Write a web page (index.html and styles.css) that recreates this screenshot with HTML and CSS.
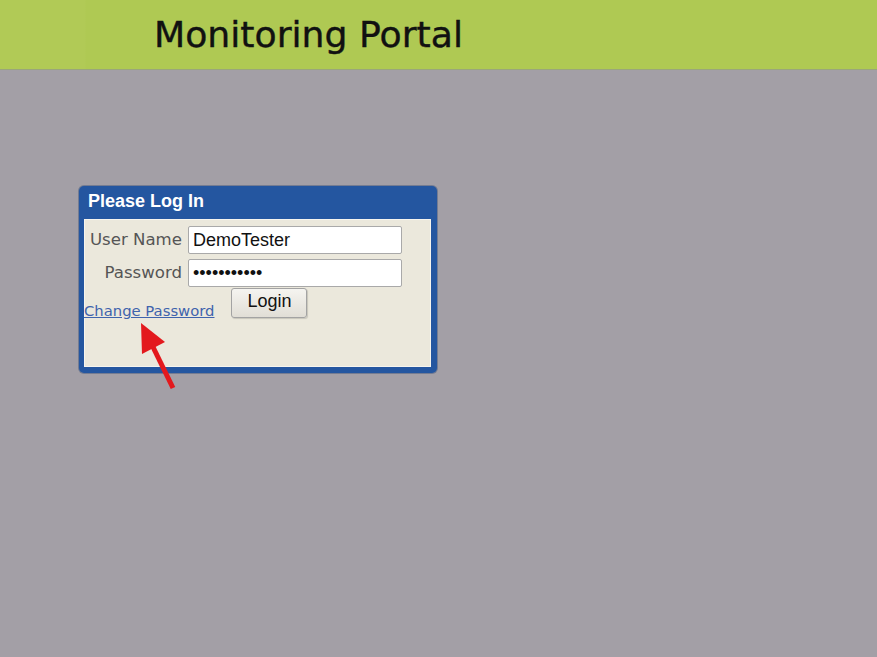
FILE: index.html
```html
<!DOCTYPE html>
<html>
<head>
<meta charset="utf-8">
<title>Monitoring Portal</title>
<link rel="stylesheet" href="styles.css">
</head>
<body>
<header class="topbar">
  <div class="logo-space"></div>
  <h1 class="title">Monitoring Portal</h1>
</header>
<main class="main">
  <section class="panel">
    <div class="panel-head">Please Log In</div>
    <div class="panel-body">
      <div class="fields">
        <label class="label" for="user">User Name</label>
        <input class="field" id="user" type="text" value="DemoTester">
        <label class="label" for="pass">Password</label>
        <input class="field" id="pass" type="password" value="DemoTester1">
      </div>
      <div class="actions">
        <a class="change" href="#">Change Password</a>
        <button class="login" type="button">Login</button>
      </div>
    </div>
  </section>
  <svg class="arrow" width="50" height="80" viewBox="0 0 50 80">
    <line x1="44" y1="77" x2="24" y2="36" stroke="#e3191d" stroke-width="5"/>
    <polygon points="12,12 36,31 13,43" fill="#e3191d"/>
  </svg>
</main>
</body>
</html>
```
FILE: styles.css
```css
html, body {
  margin: 0;
  padding: 0;
}
body {
  background: #a39fa6;
  width: 877px;
  height: 657px;
  overflow: hidden;
  font-family: "DejaVu Sans", Verdana, sans-serif;
}
.topbar {
  height: 69px;
  background: #afc953;
  display: flex;
  align-items: center;
  box-shadow: 0 1px 0 #9aa67a;
}
.logo-space {
  width: 154px;
  height: 69px;
  background: linear-gradient(90deg, #b1ca56 0px, #b1ca56 85px, #afc953 86px);
}
.title {
  margin: 0;
  font-family: "DejaVu Sans", Verdana, sans-serif;
  font-weight: normal;
  font-size: 36.2px;
  color: #111;
  line-height: 1;
  -webkit-text-stroke: 0.4px #111;
  padding-top: 1px;
}
.main {
  position: relative;
  padding: 117px 0 0 79px;
}
.panel {
  width: 358px;
  height: 187px;
  background: #2456a0;
  border-radius: 5px;
  box-sizing: border-box;
  padding: 0 6px 6px 5px;
  display: flex;
  flex-direction: column;
  box-shadow: 0 0 0 1px rgba(30, 60, 110, 0.35);
}
.panel-head {
  height: 33px;
  line-height: 31px;
  color: #fff;
  font-family: "Liberation Sans", Arial, sans-serif;
  font-weight: bold;
  font-size: 18px;
  padding-left: 4px;
}
.panel-body {
  flex: 1;
  background: #ebe8dc;
  border: 1px solid #f6f4ee;
  box-sizing: border-box;
  padding-top: 6px;
}
.fields {
  display: grid;
  grid-template-columns: 97px 214px;
  grid-auto-rows: 28px;
  column-gap: 6px;
  row-gap: 5px;
  align-items: center;
}
.label {
  text-align: right;
  font-size: 16.6px;
  color: #555;
  line-height: 28px;
}
.field {
  box-sizing: border-box;
  width: 214px;
  height: 28px;
  margin: 0;
  border: 1px solid #a9a9a9;
  border-radius: 2px;
  background: #fff;
  font-family: "Liberation Sans", Arial, sans-serif;
  font-size: 18px;
  color: #111;
  padding: 0 4px;
  outline: none;
}
.actions {
  display: flex;
  align-items: flex-end;
  margin-top: 1px;
  margin-left: -1px;
}
.change {
  font-size: 14.8px;
  color: #3f63ad;
  text-decoration: underline;
  line-height: 17px;
  margin-bottom: -1px;
}
.login {
  margin: 0 0 0 17px;
  width: 76px;
  height: 30px;
  box-sizing: border-box;
  border: 1px solid #a3a3a3;
  border-radius: 3px;
  background: linear-gradient(#f5f4f0, #e1ded6);
  font-family: "Liberation Sans", Arial, sans-serif;
  font-size: 18px;
  color: #111;
  padding: 0 0 4px;
  box-shadow: 1px 1px 1px rgba(0, 0, 0, 0.15);
}
.arrow {
  position: absolute;
  left: 129px;
  top: 242px;
}
```
